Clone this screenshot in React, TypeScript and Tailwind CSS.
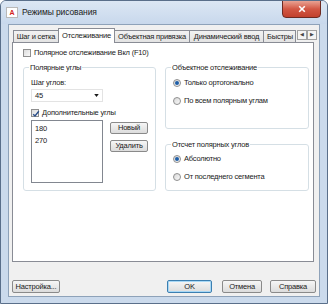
import React from "react";

const font = { fontFamily: '"Liberation Sans", Arial, sans-serif' };
const txt = "text-[7.5px] tracking-[-0.2px] leading-none text-[#1a1a1a]";

function Btn({ children, def, className = "" }: { children: React.ReactNode; def?: boolean; className?: string }) {
  return (
    <div
      className={
        "flex items-center justify-center rounded-[2px] border bg-gradient-to-b from-[#f6f6f6] to-[#dcdcdc] " +
        txt +
        " " +
        (def ? "border-[#3c7fb1] shadow-[inset_0_0_0_1px_#a8d8f5]" : "border-[#8a8a8a]") +
        " " +
        className
      }
    >
      {children}
    </div>
  );
}

function Check({ checked, label }: { checked?: boolean; label: string }) {
  return (
    <div className="flex items-center gap-[3px]">
      <div className="relative w-[8px] h-[8px] border border-[#8f8f8f] bg-gradient-to-br from-[#dcdcdc] to-[#fafafa]">
        {checked && (
          <svg viewBox="0 0 8 8" className="absolute left-0 top-0 w-[8px] h-[8px]">
            <path d="M1.2 4.2 L3 6 L6.8 1.2" stroke="#2b4f8a" strokeWidth="1.4" fill="none" />
          </svg>
        )}
      </div>
      <span className={txt}>{label}</span>
    </div>
  );
}

function Radio({ checked, label }: { checked?: boolean; label: string }) {
  return (
    <div className="flex items-center gap-[3px]">
      <div className="flex items-center justify-center w-[8px] h-[8px] rounded-full border border-[#8f8f8f] bg-gradient-to-br from-[#d8d8d8] to-[#fafafa]">
        {checked && <div className="w-[4px] h-[4px] rounded-full bg-[#1f5fa8]" />}
      </div>
      <span className={txt}>{label}</span>
    </div>
  );
}

function Group({ title, className = "", children }: { title: string; className?: string; children: React.ReactNode }) {
  return (
    <fieldset className={"border border-[#d5dfe5] rounded-[3px] px-[7px] " + className}>
      <legend className={"ml-[-2px] px-[1px] " + txt}>{title}</legend>
      {children}
    </fieldset>
  );
}

const tabs = [
  { t: "Шаг и сетка", w: "w-[45px]" },
  { t: "Отслеживание", w: "w-[57px]" },
  { t: "Объектная привязка", w: "w-[75px]" },
  { t: "Динамический ввод", w: "w-[74px]" },
  { t: "Быстры", w: "w-[32px]" },
];

export default function App() {
  return (
    <div style={font} className="w-[328px] h-[304px] bg-[#cbdaec] border border-[#5a6f8a] rounded-t-[6px] flex flex-col overflow-hidden">
      {/* title bar */}
      <div className="h-[23px] flex items-start relative bg-gradient-to-b from-[#dce7f4] to-[#c8d8ec]">
        <div className="ml-[5px] mt-[6px] w-[12px] h-[11px] bg-white border border-[#b9b9b9] flex items-center justify-center">
          <span className="text-[7px] font-bold leading-none text-[#d21f1f]">A</span>
        </div>
        <span className="ml-[4px] mt-[7px] text-[8.5px] tracking-[-0.1px] leading-none text-[#1b1b1b]">Режимы рисования</span>
        <div className="absolute right-[6px] top-[-1px] w-[39px] h-[18px] rounded-b-[4px] border border-[#6d2a22] bg-gradient-to-b from-[#e8a293] via-[#d25744] to-[#c2412d] flex items-center justify-center">
          <svg viewBox="0 0 10 10" className="w-[8px] h-[8px]">
            <path d="M1.5 1.5 L8.5 8.5 M8.5 1.5 L1.5 8.5" stroke="white" strokeWidth="2" />
          </svg>
        </div>
      </div>

      {/* client area */}
      <div className="ml-[7px] w-[312px] h-[273px] bg-[#f0f0f0] border border-[#8ea2b9] flex flex-col">
        {/* tabs */}
        <div className="flex items-end ml-[4px] mt-[2px] h-[15px]">
          {tabs.map(({ t, w }, i) => (
            <div
              key={t}
              className={
                "justify-center border border-[#898c95] border-b-0 flex items-center whitespace-nowrap overflow-hidden " +
                txt +
                " " +
                w +
                " " +
                (i === 1
                  ? "h-[15px] bg-white relative z-10 mb-[-1px] pb-[1px]"
                  : "h-[12px] bg-gradient-to-b from-[#f2f2f2] to-[#e3e3e3] " + (i > 1 ? "border-l-0" : "border-r-0")) +
                (i === 4 ? " justify-start pl-[3px]" : "")
              }
            >
              {t}
            </div>
          ))}
          <div className="flex ml-[1px] mb-[2px]">
            <div className="w-[10px] h-[10px] border border-[#a0a0a0] bg-[#f4f4f4] flex items-center justify-center text-[5px] text-[#444]">◀</div>
            <div className="w-[10px] h-[10px] border border-[#a0a0a0] bg-[#f4f4f4] flex items-center justify-center text-[5px] text-[#444]">▶</div>
          </div>
        </div>

        {/* panel */}
        <div className="ml-[3px] w-[302px] h-[220px] bg-white border border-[#898c95] flex flex-col px-[10px] pt-[6px]">
          <Check label="Полярное отслеживание Вкл (F10)" />

          <div className="flex mt-[7px] gap-[9px]">
            <Group title="Полярные углы" className="w-[131px] h-[127px]">
              <div className={"mt-[7px] " + txt}>Шаг углов:</div>
              <div className="mt-[3px] w-[72px] h-[13px] border border-[#e3e3e3] bg-white flex items-center justify-between px-[3px]">
                <span className={txt}>45</span>
                <svg viewBox="0 0 6 4" className="w-[5px] h-[3px]">
                  <path d="M0 0 L6 0 L3 4 Z" fill="#1a1a1a" />
                </svg>
              </div>
              <div className="mt-[7px]">
                <Check checked label="Дополнительные углы" />
              </div>
              <div className="flex mt-[3px] gap-[7px]">
                <div className="w-[72px] h-[63px] border border-[#828790] bg-white pl-[3px] pt-[4px] flex flex-col gap-[4px]">
                  <span className={txt}>180</span>
                  <span className={txt}>270</span>
                </div>
                <div className="flex flex-col gap-[6px] mt-[2px]">
                  <Btn className="w-[38px] h-[12px]">Новый</Btn>
                  <Btn className="w-[38px] h-[12px]">Удалить</Btn>
                </div>
              </div>
            </Group>

            <div className="flex flex-col gap-[12px]">
              <Group title="Объектное отслеживание" className="w-[144px] h-[65px]">
                <div className="mt-[7px] flex flex-col gap-[10px]">
                  <Radio checked label="Только ортогонально" />
                  <Radio label="По всем полярным углам" />
                </div>
              </Group>
              <Group title="Отсчет полярных углов" className="w-[144px] h-[50px]">
                <div className="mt-[6px] flex flex-col gap-[10px]">
                  <Radio checked label="Абсолютно" />
                  <Radio label="От последнего сегмента" />
                </div>
              </Group>
            </div>
          </div>
        </div>

        {/* bottom buttons */}
        <div className="flex mt-[18px] ml-[3px] pr-[3px] items-center">
          <Btn className="w-[48px] h-[13px]">Настройка...</Btn>
          <div className="flex-1" />
          <Btn def className="w-[45px] h-[13px]">OK</Btn>
          <Btn className="w-[40px] h-[13px] ml-[10px]">Отмена</Btn>
          <Btn className="w-[46px] h-[13px] ml-[8px]">Справка</Btn>
        </div>
      </div>
    </div>
  );
}
